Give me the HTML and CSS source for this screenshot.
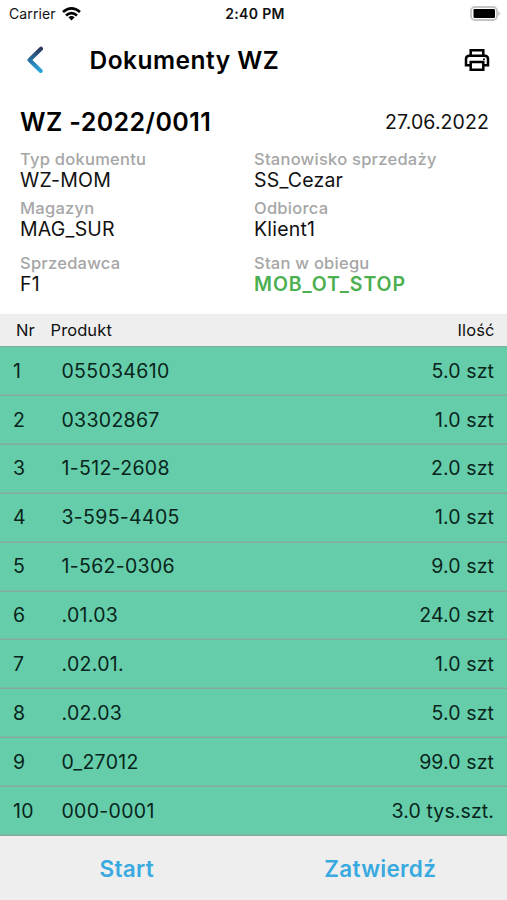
FILE: index.html
```html
<!DOCTYPE html>
<html lang="pl">
<head>
<meta charset="utf-8">
<title>Dokumenty WZ</title>
<link rel="stylesheet" href="styles.css">
</head>
<body>
<div class="screen">
  <div class="status">
    <div class="carrier"><span>Carrier</span>
      <svg class="wifi" width="19" height="14" viewBox="0 0 19 14" fill="none" stroke="#000" stroke-width="2.7">
        <path d="M1 5Q9.500-2.100 18 5"/><path d="M4 8.500Q9.500 3.800 15 8.500"/><path d="M6.400 10.200Q9.500 7.900 12.600 10.200L9.500 13.400Z" fill="#000" stroke="none"/>
      </svg>
    </div>
    <div class="time">2:40 PM</div>
    <svg class="battery" width="31" height="15" viewBox="0 0 31 15">
      <rect x="1" y="1" width="26" height="13" rx="4" fill="#fff" stroke="#c4c4c4" stroke-width="1.800"/>
      <rect x="3.500" y="3" width="21.500" height="9" rx="1.200" fill="#000"/>
      <path d="M28.500 5Q31 7.500 28.500 10Z" fill="#aaa"/>
    </svg>
  </div>
  <header class="appbar">
    <svg class="back" width="18" height="28" viewBox="0 0 18 28" fill="none">
      <defs><linearGradient id="g" x1="0" y1="0" x2="0" y2="1"><stop offset="0" stop-color="#2b3a5c"/><stop offset=".5" stop-color="#2670a3"/><stop offset="1" stop-color="#2ca6dc"/></linearGradient></defs>
      <path d="M15 2.700L3.500 14L14.700 25" stroke="url(#g)" stroke-width="4" stroke-linecap="round" stroke-linejoin="round"/>
    </svg>
    <h1 class="title">Dokumenty WZ</h1>
    <svg class="printer" width="26" height="24" viewBox="0 0 26 24" fill="none" stroke="#000" stroke-width="2.500">
      <path d="M6.700 7.500V2.200H19.300V7.500M6.700 17.200H2V11Q2 7.700 5.300 7.700H20.700Q24 7.700 24 11V17.200H19.300"/>
      <path d="M6.700 14H19.300V21.700H6.700Z"/><circle cx="20" cy="11.300" r="1" fill="#000" stroke="none"/>
    </svg>
  </header>
  <section class="details">
    <div class="heading"><h2 class="number">WZ -2022/0011</h2><div class="date">27.06.2022</div></div>
    <dl class="fields">
      <div class="field"><dt>Typ dokumentu</dt><dd>WZ-MOM</dd></div>
      <div class="field"><dt>Stanowisko sprzedaży</dt><dd>SS_Cezar</dd></div>
      <div class="field"><dt>Magazyn</dt><dd>MAG_SUR</dd></div>
      <div class="field"><dt>Odbiorca</dt><dd>Klient1</dd></div>
      <div class="field last"><dt>Sprzedawca</dt><dd>F1</dd></div>
      <div class="field last"><dt>Stan w obiegu</dt><dd class="state">MOB_OT_STOP</dd></div>
    </dl>
  </section>
  <div class="thead"><span class="hnr">Nr</span><span>Produkt</span><span class="hqty">Ilość</span></div>
  <div class="rows">
    <div class="row"><span class="nr">1</span><span>055034610</span><span class="qty">5.0 szt</span></div>
    <div class="row"><span class="nr">2</span><span>03302867</span><span class="qty">1.0 szt</span></div>
    <div class="row"><span class="nr">3</span><span>1-512-2608</span><span class="qty">2.0 szt</span></div>
    <div class="row"><span class="nr">4</span><span>3-595-4405</span><span class="qty">1.0 szt</span></div>
    <div class="row"><span class="nr">5</span><span>1-562-0306</span><span class="qty">9.0 szt</span></div>
    <div class="row"><span class="nr">6</span><span>.01.03</span><span class="qty">24.0 szt</span></div>
    <div class="row"><span class="nr">7</span><span>.02.01.</span><span class="qty">1.0 szt</span></div>
    <div class="row"><span class="nr">8</span><span>.02.03</span><span class="qty">5.0 szt</span></div>
    <div class="row"><span class="nr">9</span><span>0_27012</span><span class="qty">99.0 szt</span></div>
    <div class="row"><span class="nr">10</span><span>000-0001</span><span class="qty">3.0 tys.szt.</span></div>
  </div>
  <footer class="actions"><span class="action">Start</span><span class="action">Zatwierdź</span></footer>
</div>
</body>
</html>
```
FILE: styles.css
```css
* { box-sizing: border-box; }
body { margin: 0; background: #fff; color: #111; font-family: Inter, "Liberation Sans", sans-serif; }
h1, h2, dl, dd { margin: 0; }
.screen { width: 507px; height: 900px; display: flex; flex-direction: column; overflow: hidden; }
.status { height: 27px; display: grid; grid-template-columns: 1fr auto 1fr; align-items: center; padding: 0 6px 0 9px; font-size: 14px; }
.carrier { display: flex; align-items: center; gap: 6.5px; letter-spacing: .1px; }
.time { font-weight: 600; letter-spacing: .35px; }
.battery { justify-self: end; }
.appbar { height: 65px; display: flex; align-items: center; padding: 0 17px 0 26px; }
.title { margin-left: 45.5px; font-size: 24.5px; font-weight: 600; letter-spacing: .5px; color: #000; }
.printer { margin-left: auto; }
.details { height: 222px; padding: 12px 18px 0 20px; }
.heading { height: 36px; display: flex; align-items: center; justify-content: space-between; }
.number { font-size: 25px; font-weight: 600; color: #000; letter-spacing: .4px; }
.date { font-size: 19.5px; letter-spacing: .1px; }
.fields { display: grid; grid-template-columns: 234px 1fr; padding-top: 9px; }
.field { height: 49px; }
.field.last { padding-top: 6px; }
dt { font-size: 16.5px; line-height: 20px; font-weight: 450; color: #a6a6a6; letter-spacing: .25px; }
dd { font-size: 19.5px; line-height: 23px; letter-spacing: .2px; }
.state { color: #4caf50; font-weight: 600; letter-spacing: .9px; }
.thead { height: 32px; background: #eee; display: flex; align-items: center; padding: 0 12.5px 1px 16px; font-size: 16.5px; letter-spacing: .1px; }
.hnr { width: 34.5px; }
.hqty { margin-left: auto; }
.rows { height: 490px; display: grid; grid-template-rows: repeat(10, 1fr); border-top: 1px solid #7fae9b; background: #66cdaa; color: #08251b; }
.row { display: flex; align-items: center; padding: 0 13px 1.5px; box-shadow: inset 0 -1.4px #86aa9c; font-size: 19.5px; letter-spacing: .3px; }
.nr { width: 48.5px; }
.qty { margin-left: auto; letter-spacing: .1px; }
.actions { flex: 1; background: #eee; display: grid; grid-template-columns: 1fr 1fr; align-items: center; padding-top: 1px; text-align: center; color: #38aadf; font-size: 22.5px; font-weight: 600; letter-spacing: .3px; }
```
